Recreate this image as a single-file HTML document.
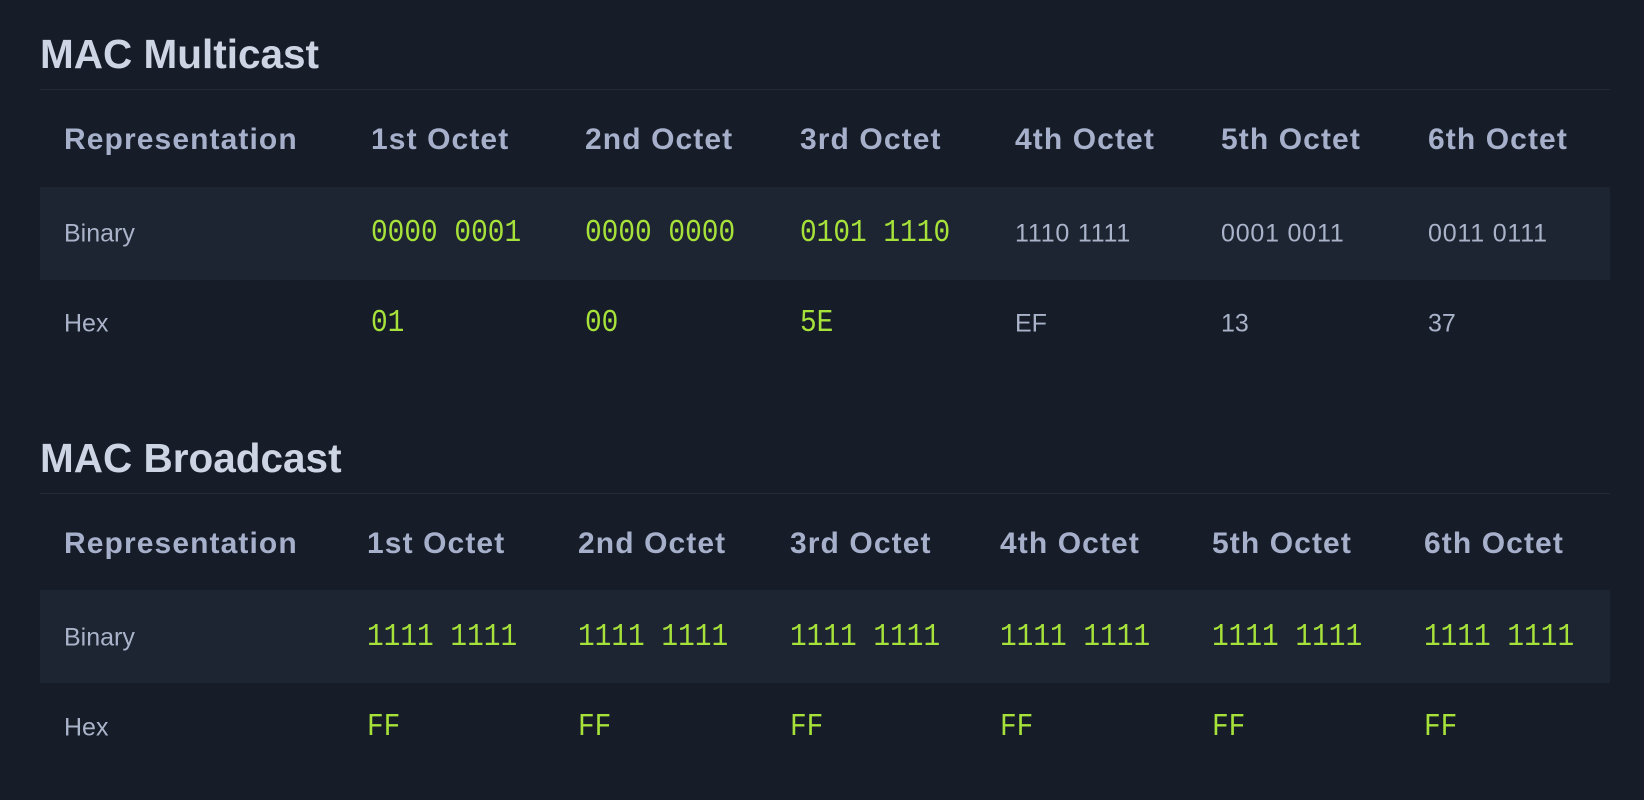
<!DOCTYPE html>
<html><head><meta charset="utf-8"><style>
html,body{margin:0;padding:0;background:#161c28;width:1644px;height:800px;overflow:hidden;font-family:"Liberation Sans",sans-serif;}
.t{position:absolute;left:40px;font-weight:bold;font-size:40.5px;color:#cdd5e4;line-height:1;}
.hr{position:absolute;left:40px;width:1570px;height:1px;background:#222a37;}
.band{position:absolute;left:40px;width:1570px;background:#1e2532;}
.c{position:absolute;white-space:pre;transform:translateY(-50%);line-height:1;}
.h{font-weight:bold;font-size:30px;color:#a6b0cb;letter-spacing:1.1px;}
.s{font-size:25px;color:#a9b3c9;}
.d{letter-spacing:0.8px;}
.m{font-family:"Liberation Mono",monospace;font-size:27.8px;color:#a6e23a;transform:translateY(-50%) scaleY(1.12);}
</style></head><body>
<div class="t" style="top:34px">MAC Multicast</div>
<div class="hr" style="top:89px"></div>
<div class="band" style="top:187px;height:93px"></div>
<div class="c h" style="left:64px;top:140px">Representation</div>
<div class="c h" style="left:371px;top:140px">1st Octet</div>
<div class="c h" style="left:585px;top:140px">2nd Octet</div>
<div class="c h" style="left:800px;top:140px">3rd Octet</div>
<div class="c h" style="left:1015px;top:140px">4th Octet</div>
<div class="c h" style="left:1221px;top:140px">5th Octet</div>
<div class="c h" style="left:1428px;top:140px">6th Octet</div>
<div class="c s" style="left:64px;top:234px">Binary</div>
<div class="c m" style="left:371px;top:234px">0000 0001</div>
<div class="c m" style="left:585px;top:234px">0000 0000</div>
<div class="c m" style="left:800px;top:234px">0101 1110</div>
<div class="c s d" style="left:1015px;top:234px">1110 1111</div>
<div class="c s d" style="left:1221px;top:234px">0001 0011</div>
<div class="c s d" style="left:1428px;top:234px">0011 0111</div>
<div class="c s" style="left:64px;top:324px">Hex</div>
<div class="c m" style="left:371px;top:324px">01</div>
<div class="c m" style="left:585px;top:324px">00</div>
<div class="c m" style="left:800px;top:324px">5E</div>
<div class="c s" style="left:1015px;top:324px">EF</div>
<div class="c s" style="left:1221px;top:324px">13</div>
<div class="c s" style="left:1428px;top:324px">37</div>

<div class="t" style="top:438px">MAC Broadcast</div>
<div class="hr" style="top:493px"></div>
<div class="band" style="top:590px;height:93px"></div>
<div class="c h" style="left:64px;top:544px">Representation</div>
<div class="c h" style="left:367px;top:544px">1st Octet</div>
<div class="c h" style="left:578px;top:544px">2nd Octet</div>
<div class="c h" style="left:790px;top:544px">3rd Octet</div>
<div class="c h" style="left:1000px;top:544px">4th Octet</div>
<div class="c h" style="left:1212px;top:544px">5th Octet</div>
<div class="c h" style="left:1424px;top:544px">6th Octet</div>
<div class="c s" style="left:64px;top:638px">Binary</div>
<div class="c m" style="left:367px;top:638px">1111 1111</div>
<div class="c m" style="left:578px;top:638px">1111 1111</div>
<div class="c m" style="left:790px;top:638px">1111 1111</div>
<div class="c m" style="left:1000px;top:638px">1111 1111</div>
<div class="c m" style="left:1212px;top:638px">1111 1111</div>
<div class="c m" style="left:1424px;top:638px">1111 1111</div>
<div class="c s" style="left:64px;top:728px">Hex</div>
<div class="c m" style="left:367px;top:728px">FF</div>
<div class="c m" style="left:578px;top:728px">FF</div>
<div class="c m" style="left:790px;top:728px">FF</div>
<div class="c m" style="left:1000px;top:728px">FF</div>
<div class="c m" style="left:1212px;top:728px">FF</div>
<div class="c m" style="left:1424px;top:728px">FF</div>
</body></html>
